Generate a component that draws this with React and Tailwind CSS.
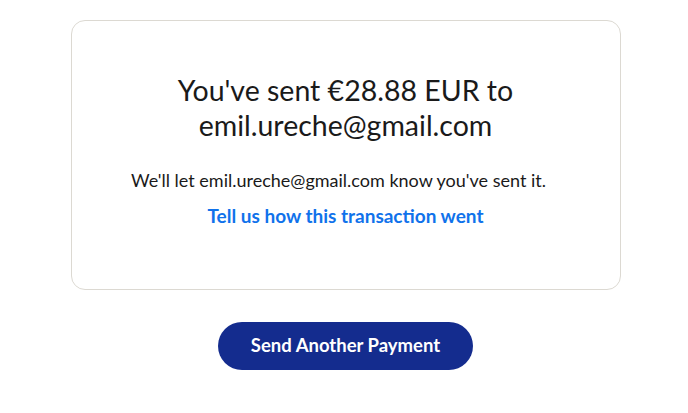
import React from "react";

export default function App() {
  const email = "emil.ureche@gmail.com";

  return (
    <div className="min-h-[413px] w-full bg-white pt-5 pl-[3px] font-['Lato','Open_Sans',sans-serif] text-[#1a1a1a]">
      <section className="mx-auto flex h-[270px] w-[550px] flex-col items-center rounded-[14px] border border-[#dcd9d2] px-8 pt-[52px] text-center">
        <h1 className="text-[28.5px] leading-[35px] font-normal">
          You've sent €28.88 EUR to
          <br />
          {email}
        </h1>
        <p className="mt-[25px] mr-[14px] text-[18px] leading-6">We'll let {email} know you've sent it.</p>
        <a href="#" className="mt-[12px] text-[19px] leading-6 font-bold text-[#1072eb]">
          Tell us how this transaction went
        </a>
      </section>

      <div className="mt-8 flex justify-center">
        <button type="button" className="h-12 w-[255px] rounded-full bg-[#142c8e] text-[18.5px] font-bold text-white">
          Send Another Payment
        </button>
      </div>
    </div>
  );
}
